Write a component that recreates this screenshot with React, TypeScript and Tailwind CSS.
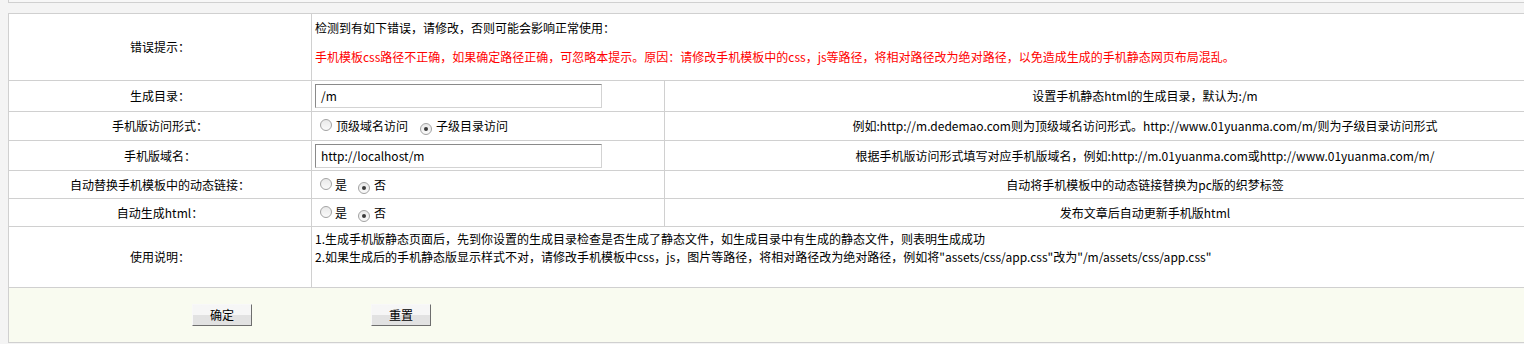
const Radio = ({ checked }: { checked?: boolean }) => (
  <span className="inline-flex w-[12px] h-[12px] shrink-0 items-center justify-center rounded-full border border-[#a3a3a3] bg-linear-to-b from-[#e9e9e9] to-[#fafafa]">
    {checked && <span className="w-[4px] h-[4px] rounded-full bg-[#3a3a3a]" />}
  </span>
);

const TextInput = ({ value }: { value: string }) => (
  <div className="w-[287px] h-[24px] flex items-center pl-[5px] bg-white border border-[#d3d3d3] border-t-[#8a8a8a] border-l-[#8a8a8a] text-[12px] text-black">
    {value}
  </div>
);

const Btn = ({ label }: { label: string }) => (
  <button className="w-[60px] h-[22px] flex items-center justify-center text-[12px] text-black border border-[#f8f8f8] border-r-[#6e6e6e] border-b-[#6e6e6e] bg-linear-to-b from-[#f6f6f6] from-50% to-[#e2e2e2] to-50%">
    {label}
  </button>
);

const cell = "border border-[#d0d0d0]";

const YesNo = () => (
  <div className="flex items-center">
    <span className="ml-[5px]"><Radio /></span>
    <span className="ml-[3px]">是</span>
    <span className="ml-[11px]"><Radio checked /></span>
    <span className="ml-[4px]">否</span>
  </div>
);

export default function App() {
  return (
    <div className="w-[1524px] h-[344px] overflow-hidden bg-[#f4f4f4] font-['Noto_Sans_CJK_SC',sans-serif] text-[12px] leading-[18px] text-black">
      <div className="pl-[8px]">
        <div className="h-[3px] border-l border-b border-[#d0d0d0] bg-[#f7f7f7]" />
        <table className="mt-[10px] w-[1618px] border-collapse bg-white table-fixed">
          <colgroup>
            <col className="w-[303px]" />
            <col className="w-[353px]" />
            <col />
          </colgroup>
          <tbody>
            <tr className="h-[67px]">
              <td className={`${cell} text-center`}>错误提示：</td>
              <td colSpan={2} className={`${cell} align-top px-[3px] pt-[5px]`}>
                <div>检测到有如下错误，请修改，否则可能会影响正常使用：</div>
                <div className="mt-[11px] text-[#ff0000]">
                  手机模板css路径不正确，如果确定路径正确，可忽略本提示。原因：请修改手机模板中的css，js等路径，将相对路径改为绝对路径，以免造成生成的手机静态网页布局混乱。
                </div>
              </td>
            </tr>
            <tr className="h-[31px]">
              <td className={`${cell} text-center`}>生成目录：</td>
              <td className={`${cell} px-[3px]`}>
                <TextInput value="/m" />
              </td>
              <td className={`${cell} text-center`}>设置手机静态html的生成目录，默认为:/m</td>
            </tr>
            <tr className="h-[29px]">
              <td className={`${cell} text-center`}>手机版访问形式：</td>
              <td className={`${cell} px-[3px]`}>
                <div className="flex items-center">
                  <span className="ml-[5px]"><Radio /></span>
                  <span className="ml-[4px]">顶级域名访问</span>
                  <span className="ml-[12px]"><Radio checked /></span>
                  <span className="ml-[4px]">子级目录访问</span>
                </div>
              </td>
              <td className={`${cell} text-center`}>
                例如:http://m.dedemao.com则为顶级域名访问形式。http://www.01yuanma.com/m/则为子级目录访问形式
              </td>
            </tr>
            <tr className="h-[30px]">
              <td className={`${cell} text-center`}>手机版域名：</td>
              <td className={`${cell} px-[3px]`}>
                <TextInput value="http://localhost/m" />
              </td>
              <td className={`${cell} text-center`}>
                根据手机版访问形式填写对应手机版域名，例如:http://m.01yuanma.com或http://www.01yuanma.com/m/
              </td>
            </tr>
            <tr className="h-[28px]">
              <td className={`${cell} text-center`}>自动替换手机模板中的动态链接：</td>
              <td className={`${cell} px-[3px]`}>
                <YesNo />
              </td>
              <td className={`${cell} text-center`}>自动将手机模板中的动态链接替换为pc版的织梦标签</td>
            </tr>
            <tr className="h-[28px]">
              <td className={`${cell} text-center`}>自动生成html：</td>
              <td className={`${cell} px-[3px]`}>
                <YesNo />
              </td>
              <td className={`${cell} text-center`}>发布文章后自动更新手机版html</td>
            </tr>
            <tr className="h-[61px]">
              <td className={`${cell} text-center`}>使用说明：</td>
              <td colSpan={2} className={`${cell} align-top px-[3px] pt-[3px]`}>
                <div>1.生成手机版静态页面后，先到你设置的生成目录检查是否生成了静态文件，如生成目录中有生成的静态文件，则表明生成成功</div>
                <div>2.如果生成后的手机静态版显示样式不对，请修改手机模板中css，js，图片等路径，将相对路径改为绝对路径，例如将"assets/css/app.css"改为"/m/assets/css/app.css"</div>
              </td>
            </tr>
            <tr className="h-[55px]">
              <td colSpan={3} className={`${cell} bg-[#f9fbf0]`}>
                <div className="flex items-center pl-[183px] gap-[119px]">
                  <Btn label="确定" />
                  <Btn label="重置" />
                </div>
              </td>
            </tr>
          </tbody>
        </table>
      </div>
    </div>
  );
}
